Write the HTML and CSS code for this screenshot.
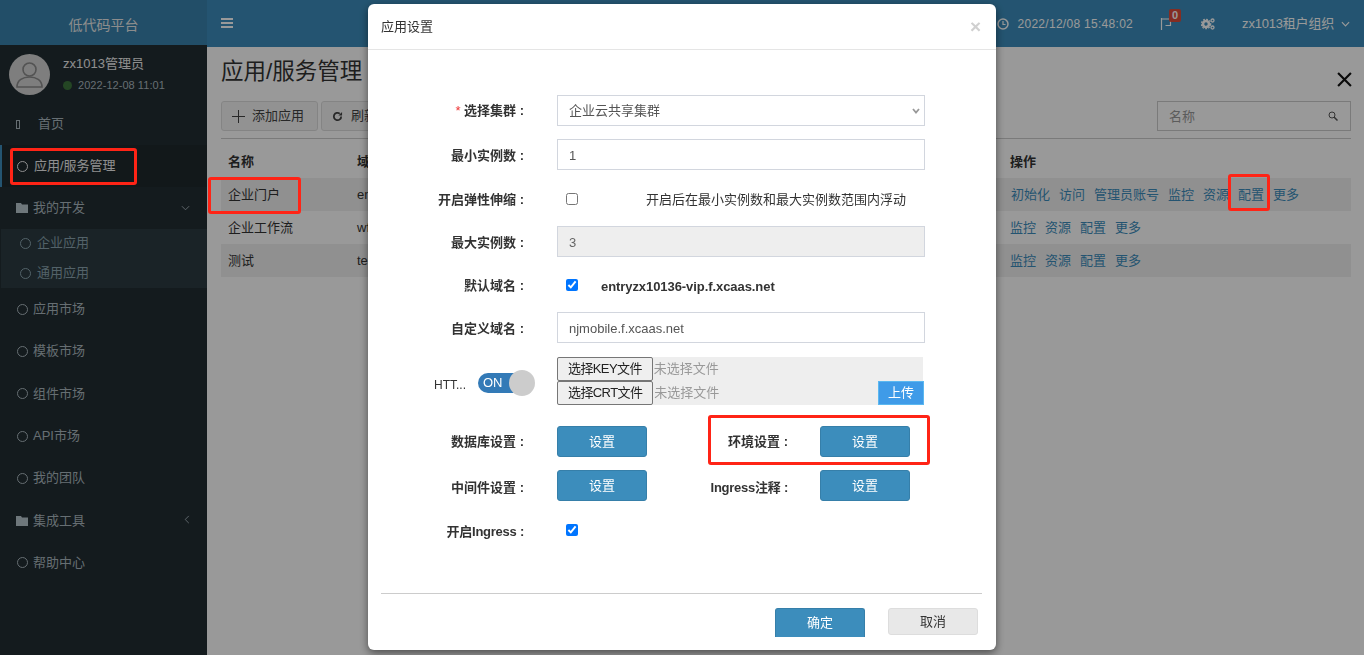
FILE: index.html
```html
<!DOCTYPE html>
<html lang="zh-CN">
<head>
<meta charset="utf-8">
<title>应用/服务管理</title>
<link rel="stylesheet" href="styles.css">
</head>
<body>
<div class="app">
  <aside class="sidebar">
    <div class="brand">低代码平台</div>
    <div class="user-panel">
      <svg class="avatar" viewBox="0 0 41 41"><circle cx="20.5" cy="20.5" r="20.5" fill="#d2d2d2"/><circle cx="20.5" cy="15.5" r="6.5" fill="none" stroke="#8a8a8a" stroke-width="1.6"/><path d="M8 33c0-7 6-10 12.500-10S33 26 33 33z" fill="none" stroke="#8a8a8a" stroke-width="1.6"/></svg>
      <div class="user-info">
        <div class="user-name">zx1013管理员</div>
        <div class="user-date"><span class="dot"></span>2022-12-08 11:01</div>
      </div>
    </div>
    <nav class="menu">
      <a class="item home"><span class="tofu"></span>首页</a>
      <a class="item active"><span class="ring"></span>应用/服务管理</a>
      <a class="item"><svg class="folder" viewBox="0 0 12 10"><path d="M0 0h5l1 1.500h6V10H0z"/></svg>我的开发<svg class="chev" viewBox="0 0 10 6"><path d="M1 1l4 4 4-4"/></svg></a>
      <div class="submenu">
        <a class="subitem"><span class="ring"></span>企业应用</a>
        <a class="subitem"><span class="ring"></span>通用应用</a>
      </div>
      <a class="item lower"><span class="ring"></span>应用市场</a>
      <a class="item lower"><span class="ring"></span>模板市场</a>
      <a class="item lower"><span class="ring"></span>组件市场</a>
      <a class="item lower"><span class="ring"></span>API市场</a>
      <a class="item lower"><span class="ring"></span>我的团队</a>
      <a class="item lower"><svg class="folder" viewBox="0 0 12 10"><path d="M0 0h5l1 1.500h6V10H0z"/></svg>集成工具<svg class="chev left" viewBox="0 0 6 10"><path d="M5 1L1 5l4 4"/></svg></a>
      <a class="item lower"><span class="ring"></span>帮助中心</a>
    </nav>
  </aside>
  <div class="main">
    <header class="topbar">
      <svg class="burger" viewBox="0 0 12 10"><path d="M0 0h12v2H0zM0 4h12v2H0zM0 8h12v2H0z"/></svg>
      <div class="top-right">
        <svg class="clock" viewBox="0 0 12 12"><circle cx="6" cy="6" r="5" fill="none" stroke="currentColor" stroke-width="1.500"/><path d="M6 3v3.500h2.500" fill="none" stroke="currentColor" stroke-width="1.200"/></svg>
        <span class="time">2022/12/08 15:48:02</span>
        <span class="flag-wrap">
          <svg class="flag" viewBox="0 0 14 14"><path d="M1.500 1v12M1.500 2h10l-1 3v3.500h-5" fill="none" stroke="currentColor" stroke-width="1.200"/></svg>
          <span class="badge">0</span>
        </span>
        <svg class="gears" viewBox="0 0 14 12"><circle cx="5" cy="6" r="3" fill="none" stroke="currentColor" stroke-width="2.600"/><circle cx="5" cy="6" r="4.700" fill="none" stroke="currentColor" stroke-width="1.200" stroke-dasharray="1.800 1.300"/><circle cx="11.500" cy="2.500" r="1.500" fill="none" stroke="currentColor" stroke-width="1.300"/><circle cx="11.500" cy="9.500" r="1.500" fill="none" stroke="currentColor" stroke-width="1.300"/></svg>
        <span class="org">zx1013租户组织</span>
        <svg class="org-chev" viewBox="0 0 10 6"><path d="M1 1l4 4 4-4"/></svg>
      </div>
    </header>
    <section class="content">
      <div class="title-row">
        <h1>应用/服务管理</h1>
        <svg class="page-close" viewBox="0 0 14 14"><path d="M1 1l12 12M13 1L1 13"/></svg>
      </div>
      <div class="toolbar">
        <button class="tool-btn"><svg class="plus" viewBox="0 0 13 13"><path d="M6.500 0v13M0 6.500h13"/></svg>添加应用</button>
        <button class="tool-btn"><svg class="refresh" viewBox="0 0 12 12"><path d="M10 6a4 4 0 1 1-1.500-3.100" fill="none" stroke="currentColor" stroke-width="2"/><path d="M11 1v4H7z" fill="currentColor"/></svg>刷新</button>
        <div class="search"><span>名称</span><svg class="lens" viewBox="0 0 10 10"><circle cx="4" cy="4" r="3" fill="none" stroke="currentColor"/><path d="M6 6l3.500 3.500" stroke="currentColor" stroke-width="1.500"/></svg></div>
      </div>
      <div class="table">
        <div class="tr head"><div>名称</div><div>域名</div><div class="head-ops">操作</div></div>
        <div class="tr odd"><div>企业门户</div><div>entry</div><div class="ops first"><a>初始化</a><a>访问</a><a>管理员账号</a><a>监控</a><a>资源</a><a>配置</a><a>更多</a></div></div>
        <div class="tr"><div>企业工作流</div><div>wf</div><div class="ops"><a>监控</a><a>资源</a><a>配置</a><a>更多</a></div></div>
        <div class="tr odd"><div>测试</div><div>test</div><div class="ops"><a>监控</a><a>资源</a><a>配置</a><a>更多</a></div></div>
      </div>
    </section>
  </div>
</div>

<div class="overlay"></div>

<div class="modal">
  <div class="modal-head"><span>应用设置</span><span class="modal-x">×</span></div>
  <form class="form">
    <div class="row r1">
      <label class="lab"><i>*</i> 选择集群 :</label>
      <select class="ctl sel"><option>企业云共享集群</option></select>
    </div>
    <div class="row r2">
      <label class="lab">最小实例数 :</label>
      <input class="ctl" value="1">
    </div>
    <div class="row r3">
      <label class="lab">开启弹性伸缩 :</label>
      <input class="chk" type="checkbox">
      <span class="hint">开启后在最小实例数和最大实例数范围内浮动</span>
    </div>
    <div class="row r4">
      <label class="lab">最大实例数 :</label>
      <input class="ctl" value="3" disabled>
    </div>
    <div class="row r5">
      <label class="lab">默认域名 :</label>
      <input class="chk" type="checkbox" checked>
      <b class="domain">entryzx10136-vip.f.xcaas.net</b>
    </div>
    <div class="row r6">
      <label class="lab">自定义域名 :</label>
      <input class="ctl" value="njmobile.f.xcaas.net">
    </div>
    <div class="row r7">
      <div class="https">
        <span class="https-label">HTT...</span>
        <span class="switch"><span>ON</span><i></i></span>
      </div>
      <div class="files">
        <div class="file-line"><button type="button" class="file-btn">选择KEY文件</button><span>未选择文件</span></div>
        <div class="file-line"><button type="button" class="file-btn">选择CRT文件</button><span>未选择文件</span><button type="button" class="upload">上传</button></div>
      </div>
    </div>
    <div class="row r8">
      <label class="lab">数据库设置 :</label>
      <button type="button" class="blue">设置</button>
      <label class="lab lab2">环境设置 :</label>
      <button type="button" class="blue">设置</button>
    </div>
    <div class="row r9">
      <label class="lab">中间件设置 :</label>
      <button type="button" class="blue">设置</button>
      <label class="lab lab2 tight">Ingress注释 :</label>
      <button type="button" class="blue">设置</button>
    </div>
    <div class="row r10">
      <label class="lab tight">开启Ingress :</label>
      <input class="chk" type="checkbox" checked>
    </div>
  </form>
  <div class="modal-foot">
    <button type="button" class="blue ok">确定</button>
    <button type="button" class="cancel">取消</button>
  </div>
</div>

<div class="mark m1"></div>
<div class="mark m2"></div>
<div class="mark m3"></div>
<div class="mark m4"></div>
</body>
</html>
```
FILE: styles.css
```css
* { box-sizing: border-box; }
html, body { margin: 0; height: 655px; overflow: hidden; }
body { font: 13px/18px "Liberation Sans", "Noto Sans CJK SC", sans-serif; color: #333; background: #fff; }
button, input, select { font: inherit; }
.app { display: flex; height: 655px; }

.sidebar { width: 207px; flex: none; background: #222d32; color: #aab8bf; }
.brand { height: 45px; background: #3c8dbc; color: #fff; display: flex; align-items: center; justify-content: center; font-size: 14px; padding-top: 4px; opacity: .9; }
.user-panel { height: 58px; display: flex; padding: 9px 0 0 9px; }
.avatar { width: 41px; height: 41px; flex: none; }
.user-info { margin-left: 13px; }
.user-name { color: #eee; margin-top: 1px; line-height: 18px; }
.user-date { font-size: 11px; line-height: 16px; margin-top: 4px; letter-spacing: .05px; display: flex; align-items: center; white-space: nowrap; }
.dot { width: 9px; height: 9px; border-radius: 50%; background: #3c763d; margin-right: 6px; }
.item { height: 42px; display: flex; align-items: center; padding-left: 17px; position: relative; }
.item.lower { height: 42.3px; }
.item.home { padding-left: 16px; }
.item.active { background: #1e282c; color: #eee; border-left: 2px solid #3c8dbc; padding-left: 15px; }
.item.active .ring { margin-right: 6px; }
.ring { width: 11px; height: 11px; border: 1px solid currentColor; border-radius: 50%; margin-right: 5px; flex: none; }
.tofu { width: 4px; height: 9px; border: 1px solid currentColor; margin-right: 18px; }
.folder { width: 12px; height: 10px; margin-right: 5px; fill: #b8c7ce; margin-left: -1px; }
.chev { width: 9px; height: 6px; fill: none; stroke: currentColor; margin-left: auto; margin-right: 17px; }
.chev.left { width: 6px; height: 9px; margin-right: 17px; margin-top: -3px; }
.submenu { height: 59px; margin-left: 1px; background: #2c3b41; color: #8aa4af; }
.subitem { height: 30px; display: flex; align-items: center; padding: 0 0 2px 19px; }
.subitem .ring { margin-right: 6px; }

.main { flex: 1; display: flex; flex-direction: column; min-width: 0; }
.topbar { height: 47px; background: #3c8dbc; color: #fff; display: flex; align-items: center; padding-left: 14px; flex: none; }
.burger { width: 12px; height: 10px; fill: #fff; margin-top: -1px; }
.top-right { margin-left: auto; display: flex; align-items: center; color: #fff; height: 46px; padding-right: 14px; }
.clock { width: 12px; height: 12px; margin-right: 8px; }
.time { font-size: 12px; letter-spacing: .29px; white-space: nowrap; }
.flag-wrap { position: relative; margin-left: 27px; width: 14px; height: 14px; display: block; }
.flag { width: 14px; height: 14px; display: block; }
.badge { position: absolute; left: 9px; top: -8px; width: 12px; height: 13px; background: #dd4b39; border-radius: 2px; color: #fff; font-size: 11px; font-weight: bold; line-height: 13px; text-align: center; }
.gears { width: 14px; height: 12px; margin-left: 27px; }
.org { margin-left: 27px; white-space: nowrap; letter-spacing: -.2px; }
.org-chev { width: 9px; height: 6px; fill: none; stroke: #fff; stroke-width: 1.3; margin-left: 7px; }

.content { flex: 1; padding: 0 13px 0 14px; background: #fff; }
.title-row { display: flex; align-items: center; justify-content: space-between; height: 54px; }
h1 { margin: 0; font-size: 22.5px; font-weight: normal; line-height: 48px; color: #333; padding-bottom: 4px; }
.page-close { width: 15px; height: 15px; fill: none; stroke: #111; stroke-width: 2; margin-top: 10px; margin-right: -1px; }
.toolbar { display: flex; gap: 3px; height: 38px; border-bottom: 1px solid #ccc; }
.tool-btn { height: 30px; width: 97px; background: #f4f4f4; border: 1px solid #ddd; border-radius: 3px; color: #444; display: flex; align-items: center; padding: 0 0 0 10px; }
.plus { width: 13px; height: 13px; stroke: #444; fill: none; margin-right: 7px; }
.refresh { width: 11px; height: 11px; margin-right: 8px; }
.search { margin-left: auto; width: 194px; height: 30px; border: 1px solid #ccc; display: flex; align-items: center; justify-content: space-between; padding: 2px 12px 0 11px; color: #999; }
.lens { width: 10px; height: 10px; color: #555; margin-top: -2px; }
.table { margin-top: 6px; }
.tr { display: grid; grid-template-columns: 129px 654px 1fr; height: 33px; align-items: center; padding-left: 7px; }
.tr.head { height: 33px; font-weight: bold; color: #333; }
.head-ops { margin-left: -1px; }
.tr.odd { background: #f0f0f0; }
.ops { display: flex; gap: 9px; color: #3c8dbc; margin-left: -1px; }
.ops.first { margin-left: 0; }

.overlay { position: fixed; inset: 0; background: rgba(0,0,0,.4); }

.modal { position: fixed; left: 368px; top: 4px; width: 628px; height: 646px; background: #fff; border-radius: 6px; box-shadow: 0 3px 9px rgba(0,0,0,.5); display: flex; flex-direction: column; }
.modal-head { height: 46px; border-bottom: 1px solid #e5e5e5; display: flex; align-items: center; justify-content: space-between; padding: 0 15px 0 13px; flex: none; }
.modal-x { font: bold 19px/20px "Liberation Sans", sans-serif; color: #d0d0d0; }
.form { padding-top: 45px; flex: 1; }
.row { display: flex; align-items: center; }
.lab { width: 156px; text-align: right; font-weight: bold; color: #333; white-space: nowrap; flex: none; margin-right: 33px; padding-top: 2px; }
.lab i { color: #e33; font-style: normal; font-weight: normal; }
.tight { letter-spacing: -.25px; }
.ctl { width: 368px; height: 31px; border: 1px solid #d2d6de; padding: 1px 11px 0; color: #555; background: #fff; border-radius: 0; outline: 0; }
.ctl:disabled { background: #eee; color: #666; }
.sel { appearance: none; padding-top: 0; background: #fff url("data:image/svg+xml,%3Csvg xmlns='http://www.w3.org/2000/svg' width='8' height='6' viewBox='0 0 8 6'%3E%3Cpath d='M1 1l3 3.500L7 1' fill='none' stroke='%23999' stroke-width='1.800'/%3E%3C/svg%3E") no-repeat right 4px center; }
.chk { width: 12px; height: 12px; margin: 0 0 0 9px; flex: none; accent-color: #0075ff; }
.hint { margin-left: 68px; white-space: nowrap; padding-top: 2px; }
.domain { margin-left: 23px; white-space: nowrap; letter-spacing: -.07px; padding-top: 3px; }
.r1 { margin-bottom: 13px; }
.r1 .lab, .r8 .lab { padding-top: 0; }
.r9 .lab, .r10 .lab { padding-top: 4px; }
.r2 { margin-bottom: 14px; }
.r3 { height: 30px; margin-bottom: 12px; }
.r4 { margin-bottom: 13px; }
.r5 { height: 30px; margin-bottom: 12px; }
.r6 { margin-bottom: 14px; }
.r7 { height: 48px; margin-bottom: 21px; }
.r8 { margin-bottom: 13px; }
.r9 { margin-bottom: 14px; }
.r10 { height: 30px; }
.https { width: 189px; flex: none; display: flex; align-items: center; padding-left: 66px; margin-top: 4px; }
.https-label { width: 44px; flex: none; font-size: 12px; padding-top: 3px; }
.switch { position: relative; width: 47px; height: 20px; background: #337ab7; border-radius: 10px; color: #fff; line-height: 20px; padding-left: 5px; font-size: 13px; }
.switch i { position: absolute; right: -10px; top: -3px; width: 26px; height: 26px; border-radius: 50%; background: #ccc; }
.files { width: 366px; height: 48px; background: #eee; color: #999; }
.file-line { display: flex; align-items: center; height: 24px; position: relative; }
.file-btn { height: 24px; padding: 0 10px; background: #efefef; border: 1px solid #767676; border-radius: 2px; color: #222; white-space: nowrap; margin-right: 1px; letter-spacing: -.6px; }
.upload { margin-left: auto; margin-right: -1px; width: 46px; height: 24px; background: #3f9be8; border: 1px solid #5bb8f0; color: #fff; padding: 0; }
.blue { width: 90px; height: 31px; background: #3c8dbc; border: 1px solid #367fa9; border-radius: 3px; color: #fff; padding: 0; flex: none; }
.lab2 { width: 141px; margin-right: 32px; }
.modal-foot { position: relative; height: 57px; margin: 0 14px 0 13px; border-top: 1px solid #ccc; display: flex; flex: none; padding: 14px 4px 0 394px; gap: 23px; align-items: flex-start; }
.ok { height: 29px; border-radius: 3px 3px 0 0; border-bottom: 0; }
.cancel { width: 90px; height: 27px; background: #e8e8e8; border: 1px solid #ddd; border-radius: 3px; color: #333; padding: 0; }

.mark { position: fixed; border: 3px solid #ff2416; border-radius: 3px; }
.m1 { left: 10px; top: 148px; width: 127px; height: 37px; }
.m2 { left: 208px; top: 177px; width: 93px; height: 37px; }
.m3 { left: 1228px; top: 174px; width: 42px; height: 37px; }
.m4 { left: 708px; top: 415px; width: 222px; height: 50px; }
```
